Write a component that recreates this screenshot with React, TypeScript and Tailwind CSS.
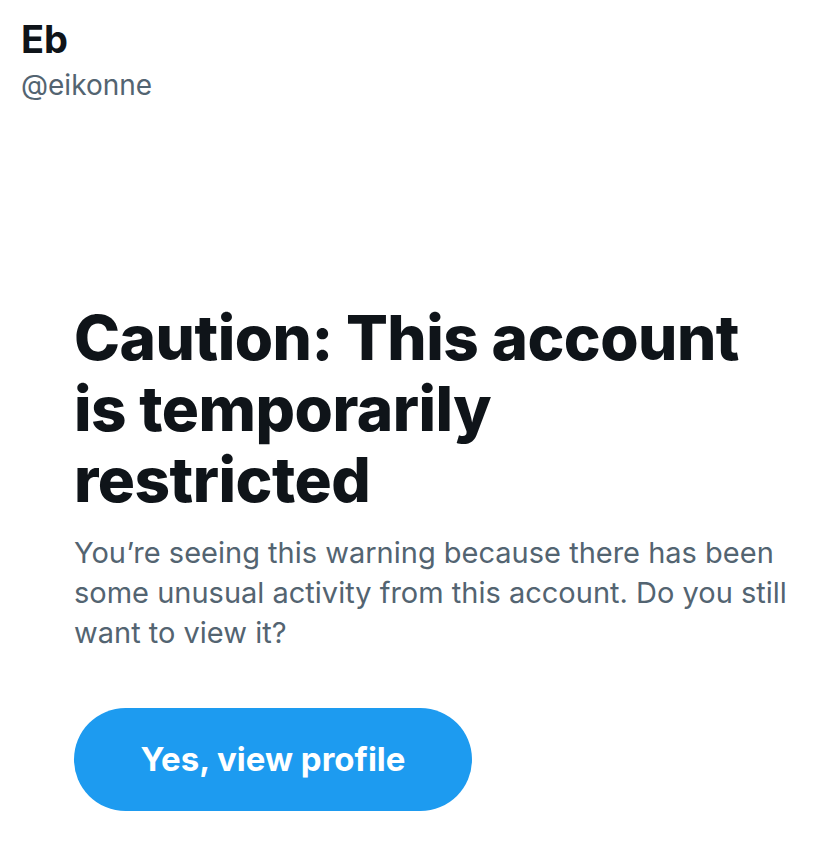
export default function App() {
  return (
    <div className="min-h-screen bg-white" style={{ fontFamily: 'Inter, "Noto Sans", sans-serif' }}>
      {/* Header */}
      <div className="pl-[21px] pt-[16px]">
        <h2 className="text-[38px] leading-[46px] font-bold text-[#0f1419]">Eb</h2>
        <p className="mt-[6px] text-[28px] leading-[34px] text-[#536471]">@eikonne</p>
      </div>

      {/* Warning */}
      <div className="pl-[74px] pr-[24px] mt-[200px]">
        <h1 className="max-w-[715px] text-[62px] leading-[71px] font-extrabold text-[#0f1419] tracking-[-0.5px]">
          Caution: This account is temporarily restricted
        </h1>
        <p className="mt-[18px] text-[29px] leading-[40px] text-[#536471]">
          You’re seeing this warning because there has been some unusual activity from this account. Do you still want to view it?
        </p>
        <button className="mt-[55px] w-[398px] h-[103px] rounded-full bg-[#1d9bf0] text-white text-[33px] font-bold">
          Yes, view profile
        </button>
      </div>
    </div>
  );
}
